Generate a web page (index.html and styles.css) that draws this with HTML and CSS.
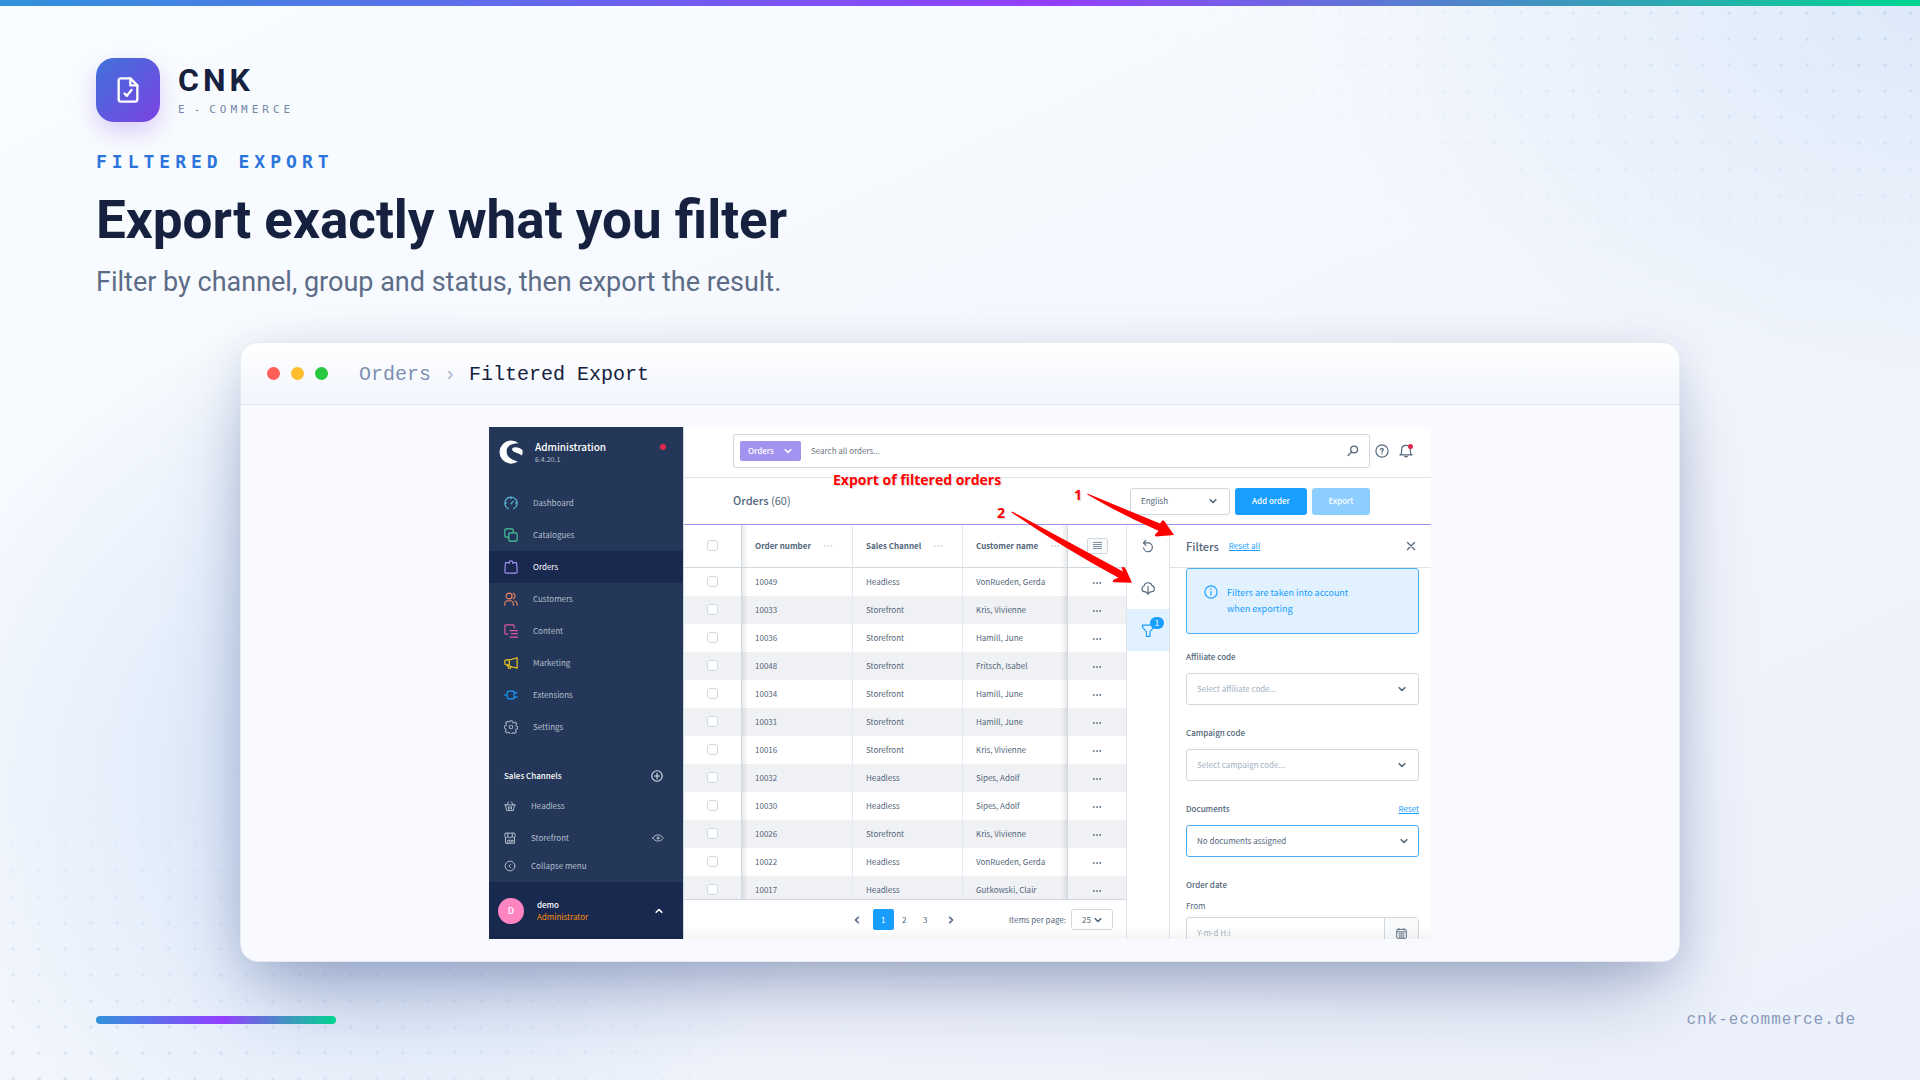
FILE: index.html
```html
<!DOCTYPE html>
<html lang="en">
<head>
  <meta charset="UTF-8">
  <meta name="viewport" content="width=device-width, initial-scale=1.0">
  <title>CNK E-Commerce - Filtered Export</title>
  <link rel="stylesheet" href="styles.css">
</head>
<body>

<!-- Shared icons -->
<svg class="sprite" aria-hidden="true">
  <symbol id="chevron" viewBox="0 0 10 10"><path d="M2.2 3.7L5 6.5l2.8-2.8" fill="none" stroke="currentColor" stroke-width="1.6" stroke-linecap="round" stroke-linejoin="round"/></symbol>
  <symbol id="dots" viewBox="0 0 10 4"><path d="M1 1.2h1.7v1.6H1zM4.2 1.2h1.7v1.6H4.2zM7.4 1.2h1.7v1.6H7.4z" fill="currentColor"/></symbol>
</svg>

<div class="slide">
  <div class="top-bar"></div>

  <header class="intro">
    <div class="brand">
      <div class="brand-icon">
        <svg viewBox="0 0 24 24" width="28" height="28" fill="none" stroke="currentColor" stroke-width="2" stroke-linecap="round" stroke-linejoin="round">
          <path d="M14 2H6a2 2 0 0 0-2 2v16a2 2 0 0 0 2 2h12a2 2 0 0 0 2-2V8z"/>
          <path d="M14 2v6h6"/>
          <path d="M9 15l2 2 4-5"/>
        </svg>
      </div>
      <div>
        <div class="brand-name">CNK</div>
        <div class="brand-sub">E<span class="hyphen">-</span>COMMERCE</div>
      </div>
    </div>
    <p class="eyebrow">FILTERED EXPORT</p>
    <h1>Export exactly what you filter</h1>
    <p class="subtitle">Filter by channel, group and status, then export the result.</p>
  </header>

  <main class="window">
    <div class="window-bar">
      <span class="light red"></span>
      <span class="light amber"></span>
      <span class="light lime"></span>
      <div class="crumbs"><span class="parent">Orders</span><span class="sep">›</span><span>Filtered Export</span></div>
    </div>

    <div class="window-body">
      <div class="admin">

        <aside class="sidebar">
          <div class="sidebar-head">
            <svg viewBox="0 0 24 24" width="24" height="24" fill="#fff">
              <path d="M19.6 3.2A11.6 11.6 0 1 0 18.8 21.6C12 19.8 7.6 16.6 7.6 11.4 7.6 6 12.2 3.2 19.6 3.2z"/>
              <path d="M23.5 10.3c-1.8-2.3-4.6-3.2-7.8-3-2.6.2-3.4 1.9-2 3.4 1.9 2 6.4 2.3 9.3 4.7.6-1.6.8-3.4.5-5.1z"/>
            </svg>
            <div class="sidebar-title">
              <strong>Administration</strong>
              <span>6.4.20.1</span>
            </div>
            <span class="status-dot"></span>
          </div>

          <nav class="nav">
            <a href="#" class="nav-item"><svg class="icon cyan" viewBox="0 0 16 16"><path d="M5 14.5a7 7 0 1 1 6 0M8 9l2.5-3M1.5 8h1.5M13 8h1.5M8 1.500V3"/></svg>Dashboard</a>
            <a href="#" class="nav-item"><svg class="icon green" viewBox="0 0 16 16"><rect x="1" y="1" width="9.5" height="9.5" rx="1.5"/><rect class="fill-bg" x="5.5" y="5.5" width="9.5" height="9.5" rx="1.5"/></svg>Catalogues</a>
            <a href="#" class="nav-item active"><svg class="icon purple" viewBox="0 0 16 16"><path d="M4.8 3H2.5c-.6 0-1 .4-1 1L1 13.5c0 .8.5 1.5 1.3 1.5h11.4c.8 0 1.3-.7 1.3-1.5L14.500 4c0-.6-.4-1-1-1h-2.300M6 4V2.300C6 1.500 6.800 1 8 1s2 .5 2 1.300V4"/></svg>Orders</a>
            <a href="#" class="nav-item"><svg class="icon orange" viewBox="0 0 16 16"><circle cx="5.8" cy="4.7" r="3.4"/><path d="M1 15v-1.5C1 11.500 2.500 10 4.500 10h2.700c2 0 3.500 1.500 3.500 3.500V15M10.500 1.500a3.400 3.400 0 0 1 0 6.300M12.500 10.200c1.500.4 2.500 1.700 2.500 3.300V15"/></svg>Customers</a>
            <a href="#" class="nav-item"><svg class="icon pink" viewBox="0 0 16 16"><path d="M4.500 11.500H2.300c-.8 0-1.300-.5-1.300-1.300V2.300C1 1.500 1.500 1 2.300 1h8c.8 0 1.300.5 1.300 1.300V4.500M7 7.500h8.500M8.500 11h7M7 15h8.500"/></svg>Content</a>
            <a href="#" class="nav-item"><svg class="icon yellow" viewBox="0 0 16 16"><path d="M6 4.500L15 2v12l-9-2.500zM6 4.500H2.500C1.500 4.500 1 5.300 1 6v2.500c0 1 .5 1.700 1.500 1.700H6M4 10.200l1.200 3.800h2.300l.5-2"/></svg>Marketing</a>
            <a href="#" class="nav-item"><svg class="icon blue" viewBox="0 0 16 16"><path d="M.5 8h3M6 3.500h4.500c.6 0 1 .4 1 1v7c0 .6-.4 1-1 1H6c-1.500 0-2.500-1-2.500-2.500V6c0-1.500 1-2.500 2.500-2.500zM11.500 5.500h3.500M11.500 10.500h3.500"/></svg>Extensions</a>
            <a href="#" class="nav-item"><svg class="icon grey" viewBox="0 0 16 16"><path d="M6.700 1h2.600l.5 1.900 1.200.5 1.700-1 1.900 1.900-1 1.700.5 1.200 1.400.3v2.600l-1.900.5-.5 1.200 1 1.700-1.900 1.900-1.700-1-1.200.5-.5 1.400H6.700l-.5-1.900-1.200-.5-1.700 1-1.900-1.900 1-1.700-.5-1.200L.6 9.300V6.700l1.800-.5.5-1.200-1-1.700 1.900-1.900 1.700 1 .9-.5z"/><circle cx="8" cy="8" r="2"/></svg>Settings</a>
          </nav>

          <div class="channels">
            <div class="channels-head">Sales Channels
              <svg class="icon light-icon" viewBox="0 0 16 16"><circle cx="8" cy="8" r="6"/><path d="M8 5v6M5 8h6"/></svg>
            </div>
            <a href="#" class="channel"><svg class="icon" viewBox="0 0 16 16"><path d="M1 6.500h14M2 6.500l1.500 7.500h9L14 6.500M4 6.500L6 2.500M12 6.500l-2-4M6 9v3M8 9v3M10 9v3"/></svg><span>Headless</span></a>
            <a href="#" class="channel"><svg class="icon" viewBox="0 0 16 16"><path d="M2 7v8h12V7M2 1.500h12l1 4c0 1.500-1 2-2 2s-2-.5-2-1.500c0 1-1.500 1.500-3 1.500S5 7 5 6c0 1-1 1.500-2 1.500S1 7 1 5.500zM5 1.500V6M11 1.500V6M5 15v-4h3v4M10 11h2v1.500h-2z"/></svg><span>Storefront</span>
              <svg class="icon" viewBox="0 0 16 16"><path d="M1 8c3.500-5.500 10.500-5.500 14 0-3.500 5.500-10.500 5.500-14 0z"/><circle cx="8" cy="8" r="1.5"/></svg></a>
            <button type="button" class="collapse"><svg class="icon" viewBox="0 0 16 16"><circle cx="8" cy="8" r="6.5"/><path d="M9 5.500L6.500 8 9 10.500"/></svg><span>Collapse menu</span></button>
          </div>

          <div class="user">
            <span class="avatar">D</span>
            <div class="user-text"><strong>demo</strong><span>Administrator</span></div>
            <svg class="chev up"><use href="#chevron"/></svg>
          </div>
        </aside>

        <section class="main">
          <div class="search-row">
            <div class="search">
              <button type="button" class="tag">Orders <svg class="chev"><use href="#chevron"/></svg></button>
              <input type="text" class="search-input" placeholder="Search all orders..." aria-label="Search all orders">
              <svg class="icon" viewBox="0 0 16 16"><circle cx="9.5" cy="6" r="4.5"/><path d="M6 9.500L1.500 14"/></svg>
            </div>
            <svg class="icon help" viewBox="0 0 16 16"><circle cx="8" cy="8" r="7"/><path d="M6.500 6.500c0-2 3-2 3 0 0 1-1.500 1-1.500 2.500M8 10.800v.4"/></svg>
            <div class="bell">
              <svg class="icon" viewBox="0 0 16 16"><path d="M1 12.500h14c-1.500-1-2-2-2-3.500V6.500C13 3.500 11 1.500 8 1.500s-5 2-5 5V9c0 1.500-.5 2.500-2 3.500zM6.500 14.500h3"/></svg>
              <span class="bell-dot"></span>
            </div>
          </div>

          <div class="toolbar">
            <h2>Orders <span>(60)</span></h2>
            <div class="select lang">
              <select aria-label="Language"><option>English</option></select>
              <svg class="chev"><use href="#chevron"/></svg>
            </div>
            <button type="button" class="btn add">Add order</button>
            <button type="button" class="btn export">Export</button>
          </div>

          <div class="content">
            <div class="listing">
              <div class="grid">
                <table>
                  <colgroup><col class="c-check"><col class="c-number"><col class="c-channel"><col class="c-name"><col class="c-more"></colgroup>
                  <thead>
                  <tr>
                    <th class="check"><input type="checkbox" aria-label="Select all"></th>
                    <th><div class="th">Order number <svg class="dots"><use href="#dots"/></svg></div></th>
                    <th><div class="th">Sales Channel <svg class="dots"><use href="#dots"/></svg></div></th>
                    <th><div class="th">Customer name <svg class="dots"><use href="#dots"/></svg></div></th>
                    <th class="more"><button type="button" class="columns" aria-label="Columns"><svg viewBox="0 0 9 9" width="9" height="9"><path d="M0 1.500h9M0 3.500h9M0 5.500h9M0 7.500h9" stroke="currentColor" stroke-width="1"/></svg></button></th>
                  </tr>
                  </thead>
                  <tbody id="orderRows">
                  </tbody>
                </table>
              </div>
              <div class="pagination">
                <div class="pages">
                  <button type="button" class="page" aria-label="Previous"><svg class="chev left"><use href="#chevron"/></svg></button>
                  <button type="button" class="page current">1</button>
                  <button type="button" class="page">2</button>
                  <button type="button" class="page">3</button>
                  <button type="button" class="page next" aria-label="Next"><svg class="chev right"><use href="#chevron"/></svg></button>
                </div>
                <label for="perPage">Items per page:</label>
                <div class="select per-page">
                  <select id="perPage"><option>25</option></select>
                  <svg class="chev"><use href="#chevron"/></svg>
                </div>
              </div>
            </div>

            <div class="strip">
              <button type="button" class="strip-btn" aria-label="Refresh"><svg class="icon" viewBox="0 0 16 16"><path d="M3 4.500h5a5 5 0 1 1-5 5.500M5.500 1.500L2.700 4.500l2.800 2.800"/></svg></button>
              <button type="button" class="strip-btn" aria-label="Export"><svg class="icon" viewBox="0 0 16 16"><path d="M5.500 12.500H4.500a3.500 3.500 0 0 1-1-6.800C4 3.500 6 2 8.200 2s3.800 1.300 4.500 3.300a3.700 3.700 0 0 1-.7 7.200h-1.500M8 6v9M5.800 12.800L8 15l2.200-2.200"/></svg></button>
              <button type="button" class="strip-btn selected" aria-label="Filters"><svg class="icon" viewBox="0 0 16 16"><path d="M1.500 2.500h13v2.800L10.300 9.500v5.800H6.200V9.500L2 5.300z"/></svg><span class="badge">1</span></button>
            </div>

            <div class="filters">
              <div class="filters-head">
                <h3>Filters</h3>
                <a href="#">Reset all</a>
                <button type="button" class="close" aria-label="Close"><svg viewBox="0 0 10 10" width="10" height="10"><path d="M1.500 1.500l7 7M8.500 1.500l-7 7" stroke="currentColor" stroke-width="1.3" stroke-linecap="round"/></svg></button>
              </div>
              <div class="filters-body">
                <div class="alert">
                  <svg class="icon" viewBox="0 0 16 16"><circle cx="8" cy="8" r="7"/><path d="M8 7.500v4M8 4.500v.5"/></svg>
                  <p>Filters are taken into account when exporting</p>
                </div>

                <div class="field">
                  <label for="affiliate">Affiliate code</label>
                  <div class="select empty">
                    <select id="affiliate"><option>Select affiliate code...</option></select>
                    <svg class="chev"><use href="#chevron"/></svg>
                  </div>
                </div>
                <div class="field">
                  <label for="campaign">Campaign code</label>
                  <div class="select empty">
                    <select id="campaign"><option>Select campaign code...</option></select>
                    <svg class="chev"><use href="#chevron"/></svg>
                  </div>
                </div>
                <div class="field">
                  <div class="field-head"><label for="documents">Documents</label><a href="#">Reset</a></div>
                  <div class="select focused">
                    <select id="documents"><option>No documents assigned</option></select>
                    <svg class="chev"><use href="#chevron"/></svg>
                  </div>
                </div>
                <div class="field">
                  <div class="legend">Order date</div>
                  <label class="sub-label" for="from">From</label>
                  <div class="date">
                    <input type="text" id="from" placeholder="Y-m-d H:i">
                    <span class="date-btn"><svg class="icon" viewBox="0 0 16 16"><rect x="1" y="2" width="14" height="13" rx="1.5"/><path d="M4.500.8v2M11.500.8v2M1 5.500h14"/><path class="thin" d="M4 8h8M4 10.500h8M4 13h8M5.500 7v7M8 7v7M10.500 7v7"/></svg></span>
                  </div>
                </div>
              </div>
            </div>
          </div>
        </section>

        <!-- Notes drawn over the admin view -->
        <div class="note note-title">Export of filtered orders</div>
        <div class="note note-one">1</div>
        <div class="note note-two">2</div>
        <svg class="arrows" viewBox="489 427 942 512" fill="#fe0000">
          <path d="M1087.4 493.6L1160 523.5 1162.5 520.3Q1165 520.5 1166 523.5L1174 535 1156 536.5Q1153.5 535.5 1156.5 533L1158.5 530.8Q1120 514 1087.4 494.6z"/>
          <path d="M1012 511.4L1123 571.5 1121.5 567.5Q1124 566 1126 569.5L1132 582.8 1113.5 582.3Q1111.5 580.5 1115 579L1118.5 577.8Q1060 546 1011.5 512.4z"/>
        </svg>
      </div>
    </div>
  </main>

  <footer class="footer">
    <span class="accent"></span>
    <span class="site">cnk-ecommerce.de</span>
  </footer>
</div>

<script>
    const orders = [
        ['10049', 'Headless', 'VonRueden, Gerda'],
        ['10033', 'Storefront', 'Kris, Vivienne'],
        ['10036', 'Storefront', 'Hamill, June'],
        ['10048', 'Storefront', 'Fritsch, Isabel'],
        ['10034', 'Storefront', 'Hamill, June'],
        ['10031', 'Storefront', 'Hamill, June'],
        ['10016', 'Storefront', 'Kris, Vivienne'],
        ['10032', 'Headless', 'Sipes, Adolf'],
        ['10030', 'Headless', 'Sipes, Adolf'],
        ['10026', 'Storefront', 'Kris, Vivienne'],
        ['10022', 'Headless', 'VonRueden, Gerda'],
        ['10017', 'Headless', 'Gutkowski, Clair']
    ];

    document.getElementById('orderRows').innerHTML = orders.map(([number, channel, customer]) => `
        <tr>
          <td class="check"><input type="checkbox" aria-label="Select ${number}"></td>
          <td>${number}</td>
          <td>${channel}</td>
          <td>${customer}</td>
          <td class="more"><svg class="dots"><use href="#dots"/></svg></td>
        </tr>`).join('');
</script>

</body>
</html>
```
FILE: styles.css
```css
* {
    box-sizing: border-box;
}

body {
    margin: 0;
    font-family: Roboto, sans-serif;
    color: #16213f;
}

h1, h2, h3, p {
    margin: 0;
}

button, input, select {
    font: inherit;
    color: inherit;
    margin: 0;
    padding: 0;
    border: none;
    background: none;
}

.sprite {
    display: none;
}

.slide {
    position: relative;
    display: flex;
    flex-direction: column;
    min-height: 100vh;
    overflow: hidden;
    background:
        radial-gradient(ellipse 620px 400px at 100% 0, rgba(60, 140, 225, 0.12), transparent),
        radial-gradient(circle 460px at 380px 760px, rgba(60, 140, 225, 0.18), transparent),
        linear-gradient(155deg, #fafdff 0%, #f4f7fd 45%, #ebf0fa 100%);
}

/* Dotted corners */
.slide::before, .slide::after {
    content: "";
    position: absolute;
    inset: 0;
    background: radial-gradient(circle, rgba(60, 120, 210, 0.12) 2px, transparent 2px) 0 0 / 26px 26px;
    mask-image: radial-gradient(ellipse 800px 330px at 100% 0, #000, transparent);
}

.slide::after {
    mask-image: radial-gradient(ellipse 900px 330px at 0 100%, #000, transparent);
}

.slide > * {
    position: relative;
    z-index: 1;
}

.top-bar {
    height: 6px;
    background: linear-gradient(90deg, #3292dc, #943eff 55%, #00d690);
}

.intro {
    padding: 52px 96px 0;
}

.brand {
    display: flex;
    align-items: center;
    gap: 18px;
}

.brand-icon {
    display: flex;
    align-items: center;
    justify-content: center;
    width: 64px;
    height: 64px;
    border-radius: 18px;
    color: #fff;
    background: linear-gradient(135deg, #3f72d9, #7c42e4);
    box-shadow: 0 10px 24px rgba(124, 66, 228, 0.25);
}

.brand-name {
    font-size: 32px;
    line-height: 36px;
    font-weight: 700;
    letter-spacing: 4px;
}

.brand-sub {
    margin-top: 4px;
    font-family: "DejaVu Sans Mono", monospace;
    font-size: 11px;
    line-height: 16px;
    letter-spacing: 4px;
    color: #7387a8;
}

.hyphen {
    padding: 0 5px;
}

.eyebrow {
    margin-top: 28px;
    font-family: "DejaVu Sans Mono", monospace;
    font-size: 18px;
    line-height: 24px;
    font-weight: 700;
    letter-spacing: 5px;
    color: #2b74dc;
}

h1 {
    margin-top: 16px;
    font-size: 53px;
    line-height: 60px;
    font-weight: 700;
}

.subtitle {
    margin-top: 14px;
    font-size: 27px;
    line-height: 36px;
    color: #5d6c87;
}

/* Browser window */
.window {
    flex: 1;
    display: flex;
    flex-direction: column;
    width: 75%;
    margin: 42px auto 0;
    border: 1px solid #e6e9f0;
    border-radius: 18px;
    background: #f8faff;
    box-shadow: 0 40px 80px -20px rgba(20, 40, 110, 0.35), 0 10px 40px rgba(20, 50, 110, 0.12);
}

.window-bar {
    display: flex;
    align-items: center;
    gap: 11px;
    height: 62px;
    padding: 0 26px;
    border-bottom: 1px solid #e3e7ee;
    border-radius: 17px 17px 0 0;
    background: linear-gradient(#ffffff, #f1f5fc);
}

.light {
    width: 13px;
    height: 13px;
    border-radius: 50%;
}

.light.red {
    background: #ff5f57;
}

.light.amber {
    background: #ffbd2e;
}

.light.lime {
    background: #28c840;
}

.crumbs {
    display: flex;
    gap: 13px;
    margin-left: 20px;
    padding-top: 2px;
    font-family: "Liberation Mono", monospace;
    font-size: 20px;
}

.crumbs .parent {
    color: #7d90b2;
}

.crumbs .sep {
    color: #a9b6cd;
}

.window-body {
    flex: 1;
    display: flex;
    justify-content: center;
    padding: 22px;
}

/* Admin view */
.admin {
    position: relative;
    display: flex;
    width: 100%;
    max-width: 942px;
    height: 512px;
    overflow: hidden;
    background: #fff;
    font-family: "Noto Sans CJK SC", sans-serif;
    font-size: 8px;
    line-height: 12px;
    color: #52667a;
}

.admin::after {
    content: "";
    position: absolute;
    inset: auto 0 0;
    height: 12px;
    background: linear-gradient(transparent, rgba(0, 0, 0, 0.04));
}

.admin a {
    color: #189eff;
}

.icon {
    width: 14px;
    height: 14px;
    flex: none;
    fill: none;
    stroke: currentColor;
    stroke-width: 1.3;
    stroke-linecap: round;
    stroke-linejoin: round;
}

.thin {
    stroke-width: 0.7;
}

.chev {
    width: 10px;
    height: 10px;
    flex: none;
}

.chev.up {
    transform: rotate(180deg);
}

.chev.left {
    transform: rotate(90deg);
}

.chev.right {
    transform: rotate(-90deg);
}

.dots {
    width: 10px;
    height: 4px;
}

.sidebar {
    display: flex;
    flex-direction: column;
    flex: none;
    width: 195px;
    border-right: 1px solid #d1d9e0;
    background: #243758;
    color: #b4bfce;
}

.sidebar-head {
    display: flex;
    align-items: flex-start;
    height: 60px;
    padding: 13px 17px 0 10px;
}

.sidebar-title {
    flex: 1;
    display: flex;
    flex-direction: column;
    margin-left: 12px;
}

.sidebar-title strong {
    font-size: 10px;
    font-weight: 500;
    line-height: 14px;
    color: #fff;
}

.sidebar-title span {
    font-size: 7px;
    line-height: 11px;
}

.status-dot {
    width: 6px;
    height: 6px;
    margin-top: 4px;
    border-radius: 50%;
    background: #de294c;
}

.nav {
    display: flex;
    flex-direction: column;
}

.admin .nav-item {
    display: flex;
    align-items: center;
    gap: 15px;
    height: 32px;
    padding: 0 15px;
    color: #b4bfce;
    text-decoration: none;
}

.admin .nav-item.active {
    background: #19284f;
    color: #fff;
}

.cyan { color: #5cc5e0; }
.green { color: #4bc79a; }
.purple { color: #a393f0; }
.orange { color: #f08362; }
.pink { color: #e6569f; }
.yellow { color: #f5d018; }
.blue { color: #189eff; }
.grey { color: #98a6b9; }

.fill-bg {
    fill: #243758;
}

.channels {
    padding-top: 19px;
}

.channels-head {
    display: flex;
    align-items: center;
    justify-content: space-between;
    height: 28px;
    padding: 0 19px 0 15px;
    font-weight: 500;
    color: #fff;
}

.light-icon {
    color: #d5dce6;
}

.admin .channel, .collapse {
    display: flex;
    align-items: center;
    gap: 15px;
    width: 100%;
    height: 32px;
    padding: 0 19px 0 15px;
    color: #b4bfce;
    text-decoration: none;
}

.channel span {
    flex: 1;
}

.channel .icon, .collapse .icon {
    width: 12px;
    height: 12px;
}

.collapse {
    height: 24px;
}

.user {
    display: flex;
    align-items: center;
    margin-top: auto;
    height: 57px;
    padding: 0 19px 0 9px;
    background: #19284f;
    color: #fff;
}

.avatar {
    display: flex;
    align-items: center;
    justify-content: center;
    width: 26px;
    height: 26px;
    border-radius: 50%;
    background: #ff85c2;
    font-size: 9px;
    font-weight: 500;
}

.user-text {
    flex: 1;
    display: flex;
    flex-direction: column;
    margin-left: 13px;
}

.user-text strong {
    font-weight: 500;
}

.user-text span {
    color: #f88e0b;
}

.main {
    flex: 1;
    display: flex;
    flex-direction: column;
    min-width: 0;
}

.search-row {
    display: flex;
    align-items: center;
    height: 51px;
    padding: 0 18px 2px 49px;
    border-bottom: 1px solid #dfe3e8;
}

.search {
    flex: 1;
    display: flex;
    align-items: center;
    height: 34px;
    padding: 0 10px 0 6px;
    border: 1px solid #d1d9e0;
    border-radius: 3px;
}

.tag {
    display: flex;
    align-items: center;
    justify-content: space-between;
    width: 61px;
    height: 20px;
    padding: 0 8px;
    border-radius: 2px;
    background: #a393f0;
    color: #fff;
    font-weight: 500;
}

.search-input {
    flex: 1;
    padding-left: 10px;
}

.search-input::placeholder {
    color: #6d7782;
    opacity: 1;
}

.search .icon {
    width: 12px;
    height: 12px;
    stroke-width: 1.7;
}

.help {
    margin: 0 10px 0 5px;
}

.bell {
    position: relative;
    display: flex;
}

.bell-dot {
    position: absolute;
    top: 0;
    right: 0;
    width: 5px;
    height: 5px;
    border-radius: 50%;
    background: #de294c;
}

.toolbar {
    display: flex;
    align-items: center;
    gap: 5px;
    height: 47px;
    padding: 0 61px 0 49px;
    border-bottom: 1px solid #a393f0;
}

.toolbar h2 {
    flex: 1;
    padding-bottom: 2px;
    font-size: 11px;
    font-weight: 500;
}

.toolbar h2 span {
    font-weight: 400;
}

.select {
    position: relative;
    display: flex;
    height: 32px;
    border: 1px solid #d1d9e0;
    border-radius: 3px;
    background: #fff;
}

.select select {
    appearance: none;
    width: 100%;
    padding: 0 10px;
    outline: none;
}

.select .chev {
    position: absolute;
    top: 50%;
    right: 11px;
    margin-top: -5px;
    pointer-events: none;
}

.select.empty select {
    color: #a3b1bf;
}

.select.focused {
    border-color: #4aaffb;
}

.select.focused .chev {
    right: 9px;
}

.select.lang {
    width: 100px;
    height: 27px;
}

.btn {
    height: 27px;
    border-radius: 3px;
    background: #189eff;
    color: #fff;
    font-weight: 500;
}

.btn.add {
    width: 72px;
}

.btn.export {
    width: 58px;
    background: #8bceff;
}

.content {
    flex: 1;
    display: flex;
    min-height: 0;
}

.listing {
    flex: 1;
    display: flex;
    flex-direction: column;
    min-width: 0;
}

.grid {
    flex: 1;
    min-height: 0;
    overflow: hidden;
}

table {
    width: 100%;
    table-layout: fixed;
    border-collapse: separate;
    border-spacing: 0;
}

.c-check { width: 58px; }
.c-number { width: 111px; }
.c-channel { width: 110px; }
.c-name { width: 105px; }
.c-more { width: 58px; }

th, td {
    height: 28px;
    padding: 0 0 1px 13px;
    text-align: left;
    font-weight: 400;
    white-space: nowrap;
    border-right: 1px solid #e4e8ec;
}

th {
    height: 43px;
    font-weight: 700;
    border-bottom: 1px solid #d1d9e0;
}

tbody tr:nth-child(even) {
    background: #f0f1f5;
}

.th {
    display: flex;
    align-items: center;
    gap: 12px;
}

.th .dots {
    color: #cdd5dd;
}

.check {
    padding-left: 0;
    text-align: center;
    border-right-color: #d1d9e0;
}

.check + td, .check + th {
    background: linear-gradient(90deg, rgba(0, 0, 0, 0.09), transparent 6px);
}

td:nth-child(4), th:nth-child(4) {
    border-right-color: #d1d9e0;
    background: linear-gradient(270deg, rgba(0, 0, 0, 0.09), transparent 6px);
}

.more {
    padding-left: 0;
    text-align: center;
    border-right: none;
}

input[type="checkbox"] {
    appearance: none;
    display: block;
    width: 11px;
    height: 11px;
    margin: 0 auto;
    border: 1px solid #d1d9e0;
    border-radius: 3px;
    background: #fff;
}

.columns {
    display: flex;
    align-items: center;
    justify-content: center;
    width: 21px;
    height: 16px;
    margin: 0 auto;
    border: 1px solid #d1d9e0;
    border-radius: 2px;
    background: #f9fafb;
    color: #7f8f9f;
}

.pagination {
    display: flex;
    align-items: center;
    gap: 5px;
    height: 40px;
    padding-right: 13px;
    border-top: 1px solid #d1d9e0;
}

.pages {
    flex: 1;
    display: flex;
    justify-content: flex-end;
    margin-right: 42px;
}

.page {
    display: flex;
    align-items: center;
    justify-content: center;
    width: 21px;
    height: 21px;
    border-radius: 2px;
}

.page:first-child {
    margin-right: 5px;
}

.page.next {
    margin-left: 5px;
}

.page.current {
    background: #189eff;
    color: #fff;
}

.select.per-page {
    width: 42px;
    height: 21px;
}

.per-page .chev {
    right: 9px;
}

.strip {
    flex: none;
    width: 44px;
    border-left: 1px solid #dfe3e8;
    border-right: 1px solid #dfe3e8;
}

.strip-btn {
    position: relative;
    display: flex;
    align-items: center;
    justify-content: center;
    width: 100%;
    height: 42px;
}

.strip-btn.selected {
    background: #e1f1ff;
    color: #189eff;
}

.badge {
    position: absolute;
    top: 8px;
    right: 5px;
    width: 14px;
    height: 12px;
    border-radius: 6px;
    background: #189eff;
    color: #fff;
}

.filters {
    flex: none;
    width: 261px;
}

.filters-head {
    display: flex;
    align-items: center;
    gap: 10px;
    height: 43px;
    padding: 0 15px 0 16px;
    border-bottom: 1px solid #dfe3e8;
}

.filters-head h3 {
    font-size: 11px;
    font-weight: 500;
}

.close {
    display: flex;
    margin-left: auto;
}

.filters-body {
    padding: 0 12px 0 16px;
}

.alert {
    display: flex;
    gap: 9px;
    height: 66px;
    margin-bottom: 15px;
    padding: 16px 17px;
    border: 1px solid #4aaffb;
    border-radius: 3px;
    background: #e1f1ff;
    color: #189eff;
}

.alert p {
    width: 140px;
    font-size: 9px;
    line-height: 16px;
}

.field {
    margin-bottom: 20px;
}

.field label, .legend {
    display: block;
    height: 16px;
    margin-bottom: 8px;
    line-height: 16px;
    font-weight: 500;
}

.field-head {
    display: flex;
    justify-content: space-between;
    line-height: 16px;
}

.legend {
    margin-bottom: 5px;
}

.field .sub-label {
    margin: 0 0 3px;
    font-weight: 400;
}

.date {
    display: flex;
    height: 32px;
    border: 1px solid #d1d9e0;
    border-radius: 3px;
}

.date input {
    flex: 1;
    min-width: 0;
    padding-left: 10px;
}

.date input::placeholder {
    color: #a3b1bf;
    opacity: 1;
}

.date-btn {
    display: flex;
    align-items: center;
    justify-content: center;
    width: 34px;
    border-left: 1px solid #d1d9e0;
    background: #f9fafb;
}

.date-btn .icon {
    width: 11px;
    height: 11px;
}

/* Notes */
.note {
    position: absolute;
    font-family: "Open Sans", sans-serif;
    font-size: 14px;
    line-height: 20px;
    font-weight: 700;
    color: #fe0000;
    text-shadow: 0 0 2px #fff, 1px 1px 1px rgba(0, 0, 0, 0.2);
}

.note-title {
    top: 43px;
    left: 344px;
}

.note-one {
    top: 58px;
    left: 585px;
}

.note-two {
    top: 76px;
    left: 508px;
}

.arrows {
    position: absolute;
    top: 0;
    left: 0;
    width: 942px;
    height: 512px;
    pointer-events: none;
}

.footer {
    display: flex;
    align-items: center;
    justify-content: space-between;
    height: 118px;
    padding: 0 64px 2px 96px;
}

.accent {
    width: 240px;
    height: 8px;
    border-radius: 4px;
    background: linear-gradient(90deg, #3292dc, #943eff 53%, #00d690);
}

.site {
    font-family: "Liberation Mono", monospace;
    font-size: 16px;
    letter-spacing: 1px;
    color: #8a9bbb;
}
```
